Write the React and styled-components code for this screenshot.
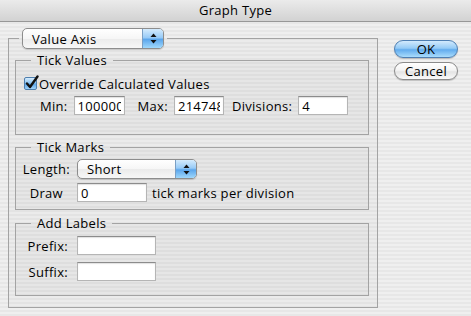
import React from 'react';
import styled, { createGlobalStyle } from 'styled-components';

const GlobalStyle = createGlobalStyle`
  html, body {
    margin: 0;
    padding: 0;
    background: #ececec;
  }
  body {
    font-family: "Open Sans", "Liberation Sans", sans-serif;
    font-size: 13px;
    letter-spacing: 0.3px;
    color: #000;
  }
`;

const pinstripe = `repeating-linear-gradient(
  to bottom,
  #efefef 0px,
  #efefef 2px,
  #e7e7e7 2px,
  #e7e7e7 4px
)`;

const Window = styled.div`
  width: 471px;
  height: 316px;
  overflow: hidden;
  background: ${pinstripe};
`;

const TitleBar = styled.div`
  height: 21px;
  line-height: 21px;
  text-align: center;
  font-size: 13px;
  background: linear-gradient(to bottom, #ebebeb, #d2d2d2);
  border-bottom: 1px solid #979797;
`;

const Body = styled.div`
  display: flex;
  align-items: flex-start;
  padding: 6px 0 0 8px;
`;

const OuterGroup = styled.fieldset`
  width: 370px;
  box-sizing: border-box;
  margin: 0;
  padding: 3px 8px 11px 6px;
  min-inline-size: 0;
  border: 1px solid #a3a3a3;
  background: rgba(0, 0, 0, 0.015);
`;

const OuterLegend = styled.legend`
  padding: 0 3px;
  margin-left: 4px;
`;

const Group = styled.fieldset`
  margin: ${({ $gap }) => $gap || 0}px 0 0 0;
  padding: 0;
  min-inline-size: 0;
  border: 1px solid #a3a3a3;
  background: rgba(0, 0, 0, 0.02);
`;

const GroupLegend = styled.legend`
  padding: 0 6px;
  margin-left: 15px;
  line-height: 16px;
`;

const GroupBody = styled.div`
  padding: ${({ $pad }) => $pad};
  display: flex;
  flex-direction: column;
  gap: ${({ $gap }) => $gap}px;
`;

const CheckRow = styled.label`
  display: flex;
  align-items: center;
  height: 17px;
  padding-left: 8px;
  gap: 2px;
`;

const CheckBox = styled.span`
  width: 13px;
  height: 13px;
  box-sizing: border-box;
  border: 1px solid #4f7fae;
  border-radius: 2px;
  background: linear-gradient(to bottom, #d6ecfd 0%, #8cc5f4 45%, #5aa5ea 55%, #9fd3fb 100%);
  position: relative;

  svg {
    position: absolute;
    left: 0px;
    top: -3px;
  }
`;

const FieldRow = styled.div`
  display: flex;
  align-items: center;
  padding-left: 24px;
`;

const Label = styled.span`
  margin-right: 6px;
  margin-left: ${({ $ml }) => $ml || 0}px;
  white-space: nowrap;
`;

const TextInput = styled.input`
  box-sizing: border-box;
  width: ${({ $w }) => $w}px;
  height: 19px;
  margin: 0;
  padding: 0 3px;
  font-family: inherit;
  font-size: 13px;
  letter-spacing: 0.3px;
  color: #000;
  background: #fff;
  border: 1px solid #b5b5b5;
  border-top-color: #8c8c8c;
  box-shadow: inset 0 1px 1px rgba(0, 0, 0, 0.12);
  outline: none;
`;

const FormGrid = styled.div`
  display: grid;
  grid-template-columns: 54px auto;
  column-gap: 7px;
  row-gap: ${({ $gap }) => $gap}px;
  align-items: center;
  justify-items: start;
`;

const GridLabel = styled.span`
  justify-self: end;
  padding-right: ${({ $pr }) => $pr || 0}px;
  white-space: nowrap;
`;

const Inline = styled.div`
  display: flex;
  align-items: center;
  gap: 5px;
  white-space: nowrap;
`;

const Popup = styled.div`
  display: flex;
  width: ${({ $w }) => $w}px;
  height: ${({ $h }) => $h}px;
  box-sizing: border-box;
  border: 1px solid #8d8d8d;
  border-radius: 5px;
  overflow: hidden;
  background: linear-gradient(to bottom, #ffffff 0%, #f6f6f6 50%, #ebebeb 51%, #f7f7f7 100%);
  box-shadow: 0 1px 1px rgba(0, 0, 0, 0.15);
`;

const PopupText = styled.span`
  flex: 1;
  padding-left: 9px;
  display: flex;
  align-items: center;
`;

const PopupArrows = styled.span`
  width: 20px;
  border-left: 1px solid #7a9fc4;
  display: flex;
  align-items: center;
  justify-content: center;
  background: linear-gradient(to bottom, #d4ebfd 0%, #98cbf7 45%, #5ba6ec 55%, #9fd8fc 100%);
`;

const Side = styled.div`
  margin: 12px 0 0 16px;
  display: flex;
  flex-direction: column;
  gap: 4px;
`;

const AquaButton = styled.button`
  width: 64px;
  height: 18px;
  box-sizing: border-box;
  padding: 0;
  font-family: inherit;
  font-size: 13px;
  letter-spacing: 0.3px;
  line-height: 16px;
  color: #000;
  border-radius: 9px;
  border: 1px solid ${({ $primary }) => ($primary ? '#4e7fb3' : '#8a8a8a')};
  background: ${({ $primary }) =>
    $primary
      ? 'linear-gradient(to bottom, #d2eafd 0%, #95cbf6 45%, #62acee 55%, #a9dcfc 100%)'
      : 'linear-gradient(to bottom, #ffffff 0%, #f4f4f4 45%, #e4e4e4 55%, #fafafa 100%)'};
  box-shadow: 0 1px 1px rgba(0, 0, 0, 0.2);
`;

const Arrows = () => (
  <svg width="7" height="11" viewBox="0 0 7 11">
    <path d="M3.5 0.5 L6.5 4 L0.5 4 Z" fill="#111" />
    <path d="M0.5 7 L6.5 7 L3.5 10.5 Z" fill="#111" />
  </svg>
);

const Check = () => (
  <svg width="14" height="15" viewBox="0 0 14 15">
    <path d="M2 8.5 L5 12 L12.5 1.5" fill="none" stroke="#111" strokeWidth="2.4" strokeLinecap="round" strokeLinejoin="round" />
  </svg>
);

export default function App() {
  return (
    <>
      <GlobalStyle />
      <Window>
        <TitleBar>Graph Type</TitleBar>
        <Body>
          <OuterGroup>
            <OuterLegend>
              <Popup $w={142} $h={21}>
                <PopupText>Value Axis</PopupText>
                <PopupArrows><Arrows /></PopupArrows>
              </Popup>
            </OuterLegend>

            <Group>
              <GroupLegend>Tick Values</GroupLegend>
              <GroupBody $pad="7px 0 19px 0" $gap={4}>
                <CheckRow>
                  <CheckBox><Check /></CheckBox>
                  Override Calculated Values
                </CheckRow>
                <FieldRow>
                  <Label>Min:</Label>
                  <TextInput $w={51} readOnly value="1000000" />
                  <Label $ml={13}>Max:</Label>
                  <TextInput $w={50} readOnly value="2147483647" />
                  <Label $ml={8}>Divisions:</Label>
                  <TextInput $w={50} readOnly value="4" />
                </FieldRow>
              </GroupBody>
            </Group>

            <Group $gap={4}>
              <GroupLegend>Tick Marks</GroupLegend>
              <GroupBody $pad="4px 0 7px 0" $gap={0}>
                <FormGrid $gap={4}>
                  <GridLabel>Length:</GridLabel>
                  <Popup $w={120} $h={20}>
                    <PopupText>Short</PopupText>
                    <PopupArrows><Arrows /></PopupArrows>
                  </Popup>
                  <GridLabel $pr={7}>Draw</GridLabel>
                  <Inline>
                    <TextInput $w={70} readOnly value="0" />
                    tick marks per division
                  </Inline>
                </FormGrid>
              </GroupBody>
            </Group>

            <Group $gap={5}>
              <GroupLegend>Add Labels</GroupLegend>
              <GroupBody $pad="5px 0 14px 0" $gap={0}>
                <FormGrid $gap={7}>
                  <GridLabel $pr={2}>Prefix:</GridLabel>
                  <TextInput $w={79} readOnly value="" />
                  <GridLabel $pr={2}>Suffix:</GridLabel>
                  <TextInput $w={79} readOnly value="" />
                </FormGrid>
              </GroupBody>
            </Group>
          </OuterGroup>

          <Side>
            <AquaButton $primary>OK</AquaButton>
            <AquaButton>Cancel</AquaButton>
          </Side>
        </Body>
      </Window>
    </>
  );
}
